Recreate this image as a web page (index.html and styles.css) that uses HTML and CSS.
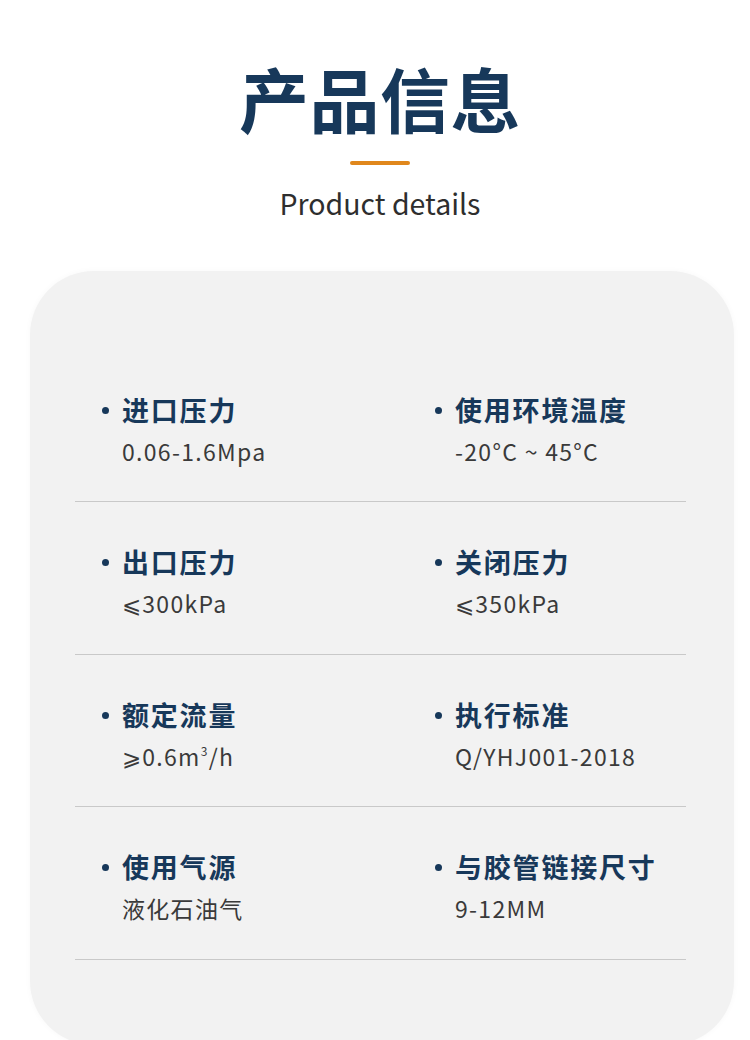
FILE: index.html
```html
<!DOCTYPE html>
<html lang="zh">
<head>
<meta charset="utf-8">
<link rel="stylesheet" href="styles.css">
</head>
<body>
<header class="head">
  <h1 class="title">产品信息</h1>
  <div class="accent"></div>
  <p class="subtitle">Product details</p>
</header>
<section class="card">
  <div class="row">
    <div class="cell"><span class="dot"></span><span class="label">进口压力</span><span class="value">0.06-1.6Mpa</span></div>
    <div class="cell"><span class="dot"></span><span class="label">使用环境温度</span><span class="value">-20°C ~ 45°C</span></div>
  </div>
  <div class="row">
    <div class="cell"><span class="dot"></span><span class="label">出口压力</span><span class="value">⩽300kPa</span></div>
    <div class="cell"><span class="dot"></span><span class="label">关闭压力</span><span class="value">⩽350kPa</span></div>
  </div>
  <div class="row">
    <div class="cell"><span class="dot"></span><span class="label">额定流量</span><span class="value">⩾0.6m<sup>3</sup>/h</span></div>
    <div class="cell"><span class="dot"></span><span class="label">执行标准</span><span class="value">Q/YHJ001-2018</span></div>
  </div>
  <div class="row">
    <div class="cell"><span class="dot"></span><span class="label">使用气源</span><span class="value">液化石油气</span></div>
    <div class="cell"><span class="dot"></span><span class="label">与胶管链接尺寸</span><span class="value">9-12MM</span></div>
  </div>
</section>
</body>
</html>
```
FILE: styles.css
```css
html, body {
  margin: 0;
  padding: 0;
  background: #ffffff;
}
body {
  width: 750px;
  height: 1040px;
  overflow: hidden;
  font-family: "Noto Sans CJK SC", "Noto Sans", sans-serif;
}
.head {
  display: flex;
  flex-direction: column;
  align-items: center;
  padding-top: 56px;
  padding-left: 10px;
}
.title {
  margin: 0;
  font-size: 70px;
  line-height: 84px;
  font-weight: 700;
  color: #17385a;
  letter-spacing: 0.5px;
}
.accent {
  width: 60px;
  height: 4px;
  border-radius: 2px;
  background: #e0871c;
  margin-top: 21px;
}
.subtitle {
  margin: 20px 0 0;
  font-size: 28.5px;
  line-height: 36px;
  color: #2e2e2e;
  font-weight: 400;
}
.card {
  margin: 50px 16px 0 30px;
  height: 774px;
  background: #f2f2f2;
  border-radius: 64px;
  padding: 79px 48px 0 45px;
  box-sizing: border-box;
  box-shadow: 0 0 6px rgba(0,0,0,0.03);
}
.row {
  display: grid;
  grid-template-columns: 333px 1fr;
  border-bottom: 1px solid #c9c9c9;
  padding: 43px 0 36.4px;
}
.cell {
  display: grid;
  grid-template-columns: 20px 1fr;
  grid-template-rows: 34px 28px;
  row-gap: 10px;
  padding-left: 27px;
  align-items: center;
}
.dot {
  width: 7px;
  height: 7px;
  border-radius: 50%;
  background: #17385a;
  grid-row: 1;
  grid-column: 1;
  margin-top: 1px;
}
.label {
  grid-row: 1;
  grid-column: 2;
  font-size: 27px;
  line-height: 34px;
  font-weight: 700;
  color: #17385a;
  letter-spacing: 1.8px;
}
.value {
  grid-row: 2;
  grid-column: 2;
  font-size: 23px;
  line-height: 28px;
  color: #3a3a3a;
  letter-spacing: 1.3px;
}
.value sup {
  font-size: 12px;
  line-height: 0;
  vertical-align: 10px;
}
```
